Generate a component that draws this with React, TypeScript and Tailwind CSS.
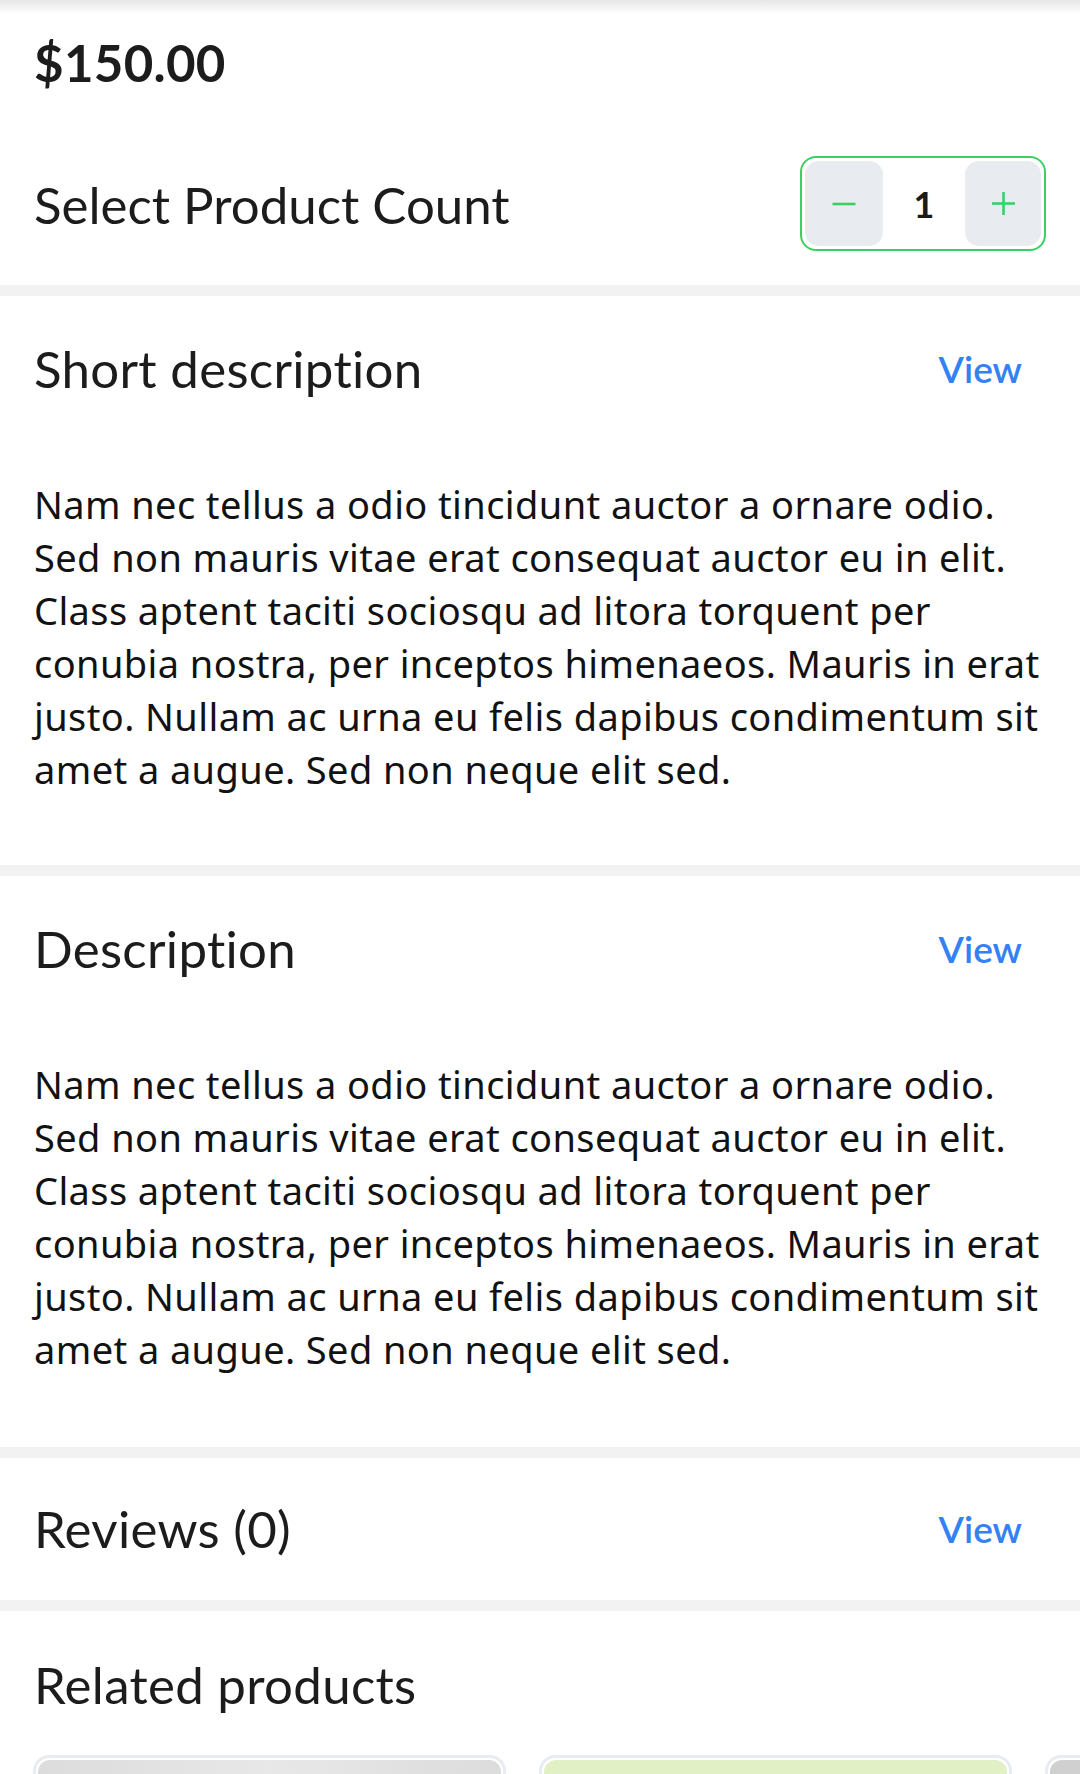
import React from "react";

const LINES = [
  "Nam nec tellus a odio tincidunt auctor a ornare odio.",
  "Sed non mauris vitae erat consequat auctor eu in elit.",
  "Class aptent taciti sociosqu ad litora torquent per",
  "conubia nostra, per inceptos himenaeos. Mauris in erat",
  "justo. Nullam ac urna eu felis dapibus condimentum sit",
  "amet a augue. Sed non neque elit sed.",
];

const heading = "font-['Lato','Noto_Sans',sans-serif] text-[51px] text-[#1c1c1c]";

function Band() {
  return <div className="h-[11px] bg-[#f2f2f2]" />;
}

function HeaderRow({ title, h }: { title: string; h: string }) {
  return (
    <div className={`flex items-center justify-between pl-[34px] pr-[58px] ${h}`}>
      <span className={`${heading} tracking-[0.3px]`}>{title}</span>
      <span className="font-['Lato','Noto_Sans',sans-serif] text-[37px] font-semibold text-[#3381f5]">View</span>
    </div>
  );
}

function TextSection({ title, h }: { title: string; h: string }) {
  return (
    <section className={`bg-white ${h}`}>
      <HeaderRow title={title} h="h-[146px]" />
      <p className="px-[34px] pt-[36px] font-['Noto_Sans',sans-serif] text-[38px] leading-[53px] tracking-[0.4px] text-[#121212]">
        {LINES.map((l, i) => (
          <span key={i} className="block whitespace-nowrap">
            {l}
          </span>
        ))}
      </p>
    </section>
  );
}

export default function App() {
  return (
    <div className="w-[1080px] h-[1774px] overflow-hidden bg-white">
      <section className="h-[285px]">
        <div className="h-[14px] bg-gradient-to-b from-[#e6e6e6] to-white" />
        <div className="flex h-[115px] items-center px-[34px] pb-[16px]">
          <span className="font-['Lato','Noto_Sans',sans-serif] text-[51px] font-bold tracking-[0.3px] text-[#1c1c1c]">
            $150.00
          </span>
        </div>
        <div className="flex h-[149px] items-center justify-between pl-[34px] pr-[34px]">
          <span className={`${heading} pt-[4px]`}>Select Product Count</span>
          <div className="flex h-[95px] w-[246px] items-center rounded-[16px] border-2 border-[#3ecf64] p-[3px]">
            <button className="flex h-[85px] w-[78px] items-center justify-center rounded-[14px] bg-[#e8ebef]">
              <svg width="24" height="24" viewBox="0 0 24 24">
                <line x1="0.5" y1="12" x2="23.5" y2="12" stroke="#3ecf64" strokeWidth="2.6" />
              </svg>
            </button>
            <span className="flex flex-1 items-center justify-center font-['Lato','Noto_Sans',sans-serif] text-[36px] font-bold text-[#1a1a1a]">
              1
            </span>
            <button className="flex h-[85px] w-[76px] items-center justify-center rounded-[14px] bg-[#e8ebef]">
              <svg width="23" height="23" viewBox="0 0 23 23">
                <line x1="0" y1="11.5" x2="23" y2="11.5" stroke="#3ecf64" strokeWidth="2.6" />
                <line x1="11.5" y1="0" x2="11.5" y2="23" stroke="#3ecf64" strokeWidth="2.6" />
              </svg>
            </button>
          </div>
        </div>
      </section>
      <Band />
      <TextSection title="Short description" h="h-[569px]" />
      <Band />
      <TextSection title="Description" h="h-[571px]" />
      <Band />
      <section className="bg-white">
        <HeaderRow title="Reviews (0)" h="h-[142px]" />
      </section>
      <Band />
      <section className="bg-white">
        <div className="px-[34px] pt-[44px]">
          <h2 className={`${heading} leading-[60px] tracking-[0.3px]`}>Related products</h2>
        </div>
        <div className="mt-[40px] flex gap-[33px] px-[33px]">
          <div className="w-[473px] shrink-0 rounded-[16px] border-[3px] border-[#e8ecf0] bg-white p-[2px]">
            <div className="h-[400px] rounded-[12px] bg-gradient-to-r from-[#dcdcdc] via-[#e8e8e8] to-[#dcdcdc]" />
          </div>
          <div className="w-[473px] shrink-0 rounded-[16px] border-[3px] border-[#e8ecf0] bg-white p-[2px]">
            <div className="h-[400px] rounded-[12px] bg-[#e2f0c6]" />
          </div>
          <div className="w-[473px] shrink-0 rounded-[16px] border-[3px] border-[#e8ecf0] bg-white p-[2px]">
            <div className="h-[400px] rounded-[12px] bg-[#d0d0d0]" />
          </div>
        </div>
      </section>
    </div>
  );
}
